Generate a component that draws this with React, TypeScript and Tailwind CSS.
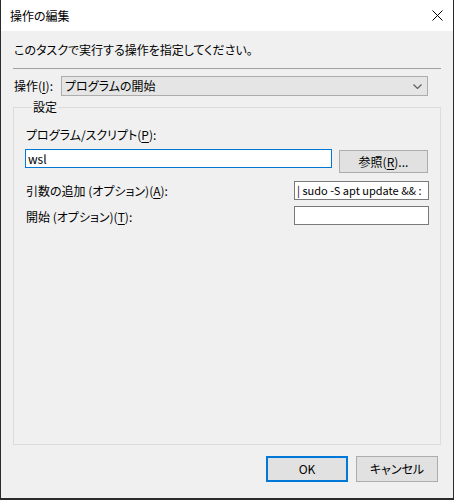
import React from 'react'

const font = "font-['Noto_Sans_CJK_JP','Noto_Sans',sans-serif] [font-feature-settings:'palt']"

const Key = ({k}: {k: string}) => <span className="underline underline-offset-2">{k}</span>

const TextBox = ({value, className}: {value?: string; className: string}) => (
  <div className={`bg-white h-[19px] flex items-center px-[2px] overflow-hidden whitespace-nowrap leading-none ${className}`}>
    {value}
  </div>
)

const Button = ({children, primary}: {children: React.ReactNode; primary?: boolean}) => (
  <button
    className={`w-[82px] h-[26px] bg-[#e1e1e1] text-[12px] text-black flex items-center justify-center ${
      primary ? 'border-2 border-[#0078d7]' : 'border border-[#adadad]'
    }`}
  >
    {children}
  </button>
)

export default function App() {
  return (
    <div className={`w-[454px] h-[500px] flex flex-col bg-[#f0f0f0] border-l border-r border-b-2 border-[#2b2b2b] text-black ${font}`}>
      {/* title bar */}
      <div className="h-[31px] bg-white flex items-center justify-between pl-[9px] pr-[9px] shrink-0">
        <span className="text-[12px]">操作の編集</span>
        <svg width="11" height="11" viewBox="0 0 11 11" className="mr-[1px]">
          <path d="M0.5 0.5 L10.5 10.5 M10.5 0.5 L0.5 10.5" stroke="#000" strokeWidth="1" />
        </svg>
      </div>

      <div className="flex flex-col pl-[12px] pr-[12px]">
        <div className="mt-[11px] pl-px text-[12px] leading-[16px]">このタスクで実行する操作を指定してください。</div>
        <div className="mt-[10px] h-px bg-[#a0a0a0]" />

        <div className="mt-[7px] flex items-center h-[20px]">
          <span className="pl-px w-[48px] text-[12px]">
            操作(<Key k="I" />):
          </span>
          <div className="w-[367px] h-[20px] bg-[#e5e5e5] border border-[#adadad] flex items-center justify-between pl-[3px] pr-[5px] text-[12px]">
            <span>プログラムの開始</span>
            <svg width="9" height="5" viewBox="0 0 9 5">
              <path d="M0.5 0.5 L4.5 4.5 L8.5 0.5" stroke="#606060" strokeWidth="1.2" fill="none" />
            </svg>
          </div>
        </div>

        <fieldset className="mt-[3px] h-[346px] border border-[#dcdcdc] px-[11px]">
          <legend className="ml-[7px] px-px text-[12px] leading-[16px]">設定</legend>

          <div className="mt-[12px] pl-px text-[12px] leading-[16px]">
            プログラム/スクリプト(<Key k="P" />):
          </div>
          <div className="mt-[6px] flex items-start">
            <TextBox value="wsl" className="w-[307px] border border-[#0078d7] text-[12px]" />
            <div className="ml-[7px] mt-px w-[89px] h-[23px] bg-[#e1e1e1] border border-[#adadad] flex items-center justify-center text-[12px]">
              参照(<Key k="R" />)...
            </div>
          </div>

          <div className="mt-[8px] flex items-center justify-between">
            <span className="pl-px text-[12px] leading-[16px]">
              引数の追加 (オプション)(<Key k="A" />):
            </span>
            <TextBox value="| sudo -S apt update && :" className="w-[135px] border border-[#7a7a7a] text-[11px]" />
          </div>

          <div className="mt-[6px] flex items-center justify-between">
            <span className="pl-px text-[12px] leading-[16px] mt-[2px]">
              開始 (オプション)(<Key k="T" />):
            </span>
            <TextBox className="w-[135px] border border-[#7a7a7a] text-[12px]" />
          </div>
        </fieldset>

        <div className="mt-[11px] flex justify-end gap-[8px] pr-[3px]">
          <Button primary>OK</Button>
          <Button>キャンセル</Button>
        </div>
      </div>
    </div>
  )
}
